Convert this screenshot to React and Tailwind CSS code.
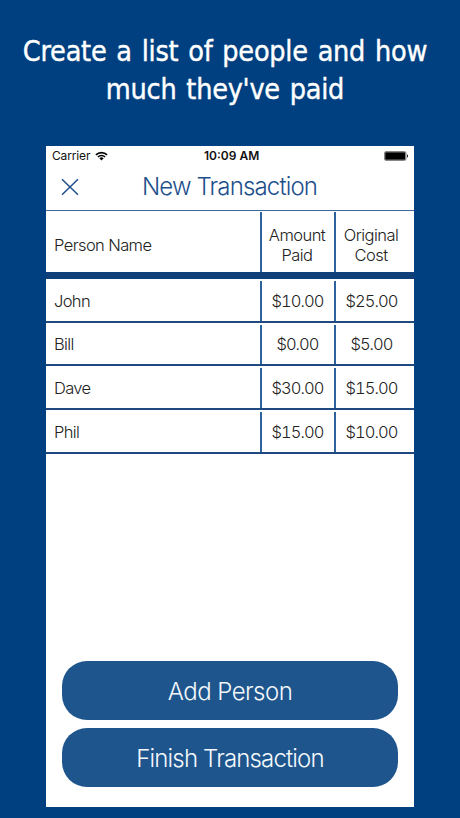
const people = [
  { name: 'John', paid: '$10.00', cost: '$25.00', height: 'h-[44px]' },
  { name: 'Bill', paid: '$0.00', cost: '$5.00', height: 'h-[43px]' },
  { name: 'Dave', paid: '$30.00', cost: '$15.00', height: 'h-[44px]' },
  { name: 'Phil', paid: '$15.00', cost: '$10.00', height: 'h-[44px]' },
];

function StatusBar() {
  return (
    <div className="flex h-[20px] items-center pl-[6px] pr-[5px] text-[12px] leading-none text-[#111]">
      <span className="w-[43px] tracking-[-0.15px]">Carrier</span>
      <svg className="h-[10px] w-[13px]" viewBox="0 0 13 10" fill="none" stroke="#000" strokeWidth="1.6">
        <path d="M0.9 3.9a8 8 0 0 1 11.2 0" />
        <path d="M2.9 6a5.1 5.1 0 0 1 7.2 0" />
        <path d="M6.5 9.4 4.4 7.3a3 3 0 0 1 4.2 0z" fill="#000" stroke="none" />
      </svg>
      <span className="ml-[96px] whitespace-nowrap font-semibold">10:09 AM</span>
      <svg className="ml-auto h-[10px] w-[25px]" viewBox="0 0 25 10">
        <rect x="0.5" y="0.5" width="21.5" height="9" rx="1.5" fill="#fff" stroke="#888" />
        <rect x="1.2" y="1.2" width="20.1" height="7.6" rx="0.6" fill="#000" />
        <path d="M23 3.2a2 2 0 0 1 0 3.6z" fill="#222" />
      </svg>
    </div>
  );
}

function NavBar() {
  return (
    <div className="flex h-[45px] items-center border-b border-[#3f6798] text-[#1e4f8c]">
      <svg className="-mt-[3px] ml-[15px] h-[18px] w-[18px]" viewBox="0 0 18 18" stroke="currentColor" strokeWidth="1.5">
        <path d="M1 1.2 17 16.8M17 1.2 1 16.8" />
      </svg>
      <h2 className="-mt-[3px] w-[301px] text-center text-[24px] font-light tracking-[-0.85px]">New Transaction</h2>
    </div>
  );
}

function Rows() {
  return people.map((p) => (
    <div key={p.name} className={`flex border-b-2 border-[#1f4a80] pt-[2px] text-[16.5px] font-light text-[#222] ${p.height}`}>
      <div className="flex flex-1 items-center pl-[8px] tracking-[-0.65px]">{p.name}</div>
      <div className="flex w-[74px] items-center justify-center border-l-2 border-[#2d639c] pr-[1px] tabular-nums tracking-[-0.95px]">{p.paid}</div>
      <div className="flex w-[80px] items-center justify-center border-l-2 border-[#2d639c] pr-[7px] tabular-nums tracking-[-0.95px]">{p.cost}</div>
    </div>
  ));
}

function ActionButton({ children }) {
  return (
    <button className="flex h-[59px] w-[336px] items-center justify-center rounded-[25px] bg-[#1e558c] pt-[3px] text-[24px] font-light text-[#f4f8fc]">
      {children}
    </button>
  );
}

export default function App() {
  return (
    <div className="flex h-[818px] w-[460px] flex-col overflow-hidden bg-[#004080] font-['Inter','Liberation_Sans',sans-serif]">
      <h1 className="h-[146px] pr-[10px] pt-[33px] text-center font-['DejaVu_Sans_Condensed','DejaVu_Sans',sans-serif] text-[28.5px] leading-[38px] tracking-[-0.25px] [-webkit-text-stroke:0.4px_white] [word-spacing:2px] text-white">
        Create a list of people and how
        <br />
        much they've paid
      </h1>
      <main className="ml-[46px] flex h-[661px] w-[368px] flex-col bg-white">
        <StatusBar />
        <NavBar />
        <div className="flex h-[68px] border-b-[7px] border-[#104079] pt-px text-[16.5px] font-light leading-[20px] text-[#222]">
          <div className="flex flex-1 items-center pl-[8px] pt-[5px] tracking-[-0.6px]">Person Name</div>
          <div className="flex w-[74px] items-center justify-center border-l-2 border-[#2d639c] pr-[2px] pt-[5px] text-center tracking-[-0.55px]">
            Amount
            <br />
            Paid
          </div>
          <div className="flex w-[80px] items-center justify-center border-l-2 border-[#2d639c] pr-[8px] pt-[5px] text-center tracking-[-0.55px]">
            Original
            <br />
            Cost
          </div>
        </div>
        <Rows />
        <div className="mb-[20px] mt-auto flex flex-col items-center gap-[8px]">
          <ActionButton>
            <span className="tracking-[-0.55px]">Add Person</span>
          </ActionButton>
          <ActionButton>
            <span className="tracking-[-0.85px]">Finish Transaction</span>
          </ActionButton>
        </div>
      </main>
    </div>
  );
}
